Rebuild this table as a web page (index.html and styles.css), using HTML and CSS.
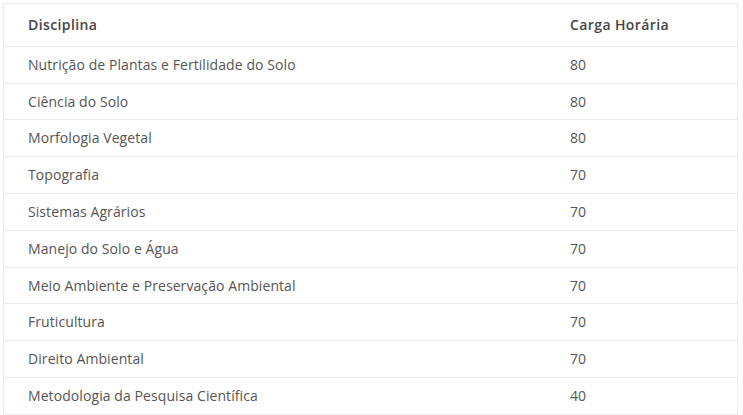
FILE: index.html
```html
<!DOCTYPE html>
<html lang="pt">
<head>
<meta charset="utf-8">
<link rel="stylesheet" href="styles.css">
</head>
<body>
<table class="grade">
  <thead>
    <tr><th class="c1">Disciplina</th><th class="c2">Carga Horária</th></tr>
  </thead>
  <tbody>
    <tr><td>Nutrição de Plantas e Fertilidade do Solo</td><td>80</td></tr>
    <tr><td>Ciência do Solo</td><td>80</td></tr>
    <tr><td>Morfologia Vegetal</td><td>80</td></tr>
    <tr><td>Topografia</td><td>70</td></tr>
    <tr><td>Sistemas Agrários</td><td>70</td></tr>
    <tr><td>Manejo do Solo e Água</td><td>70</td></tr>
    <tr><td>Meio Ambiente e Preservação Ambiental</td><td>70</td></tr>
    <tr><td>Fruticultura</td><td>70</td></tr>
    <tr><td>Direito Ambiental</td><td>70</td></tr>
    <tr><td>Metodologia da Pesquisa Científica</td><td>40</td></tr>
  </tbody>
</table>
</body>
</html>
```
FILE: styles.css
```css
html, body { background: #fff; }
body {
  margin: 3px;
  font-family: "Open Sans", "Liberation Sans", sans-serif;
  font-size: 14px;
  color: #555;
}
.grade {
  width: 735px;
  border-collapse: collapse;
  border: 1px solid #ebebeb;
}
.grade th, .grade td {
  text-align: left;
  padding: 8px 24px;
  line-height: 19.8px;
  border-bottom: 1px solid #ebebeb;
  letter-spacing: 0.08px;
}
.grade th {
  font-weight: 600;
  color: #444;
  letter-spacing: 0.4px;
  padding-top: 11px;
  padding-bottom: 11px;
}
.grade .c1 { width: 494px; }
.grade tbody tr:last-child td { border-bottom: none; }
```
